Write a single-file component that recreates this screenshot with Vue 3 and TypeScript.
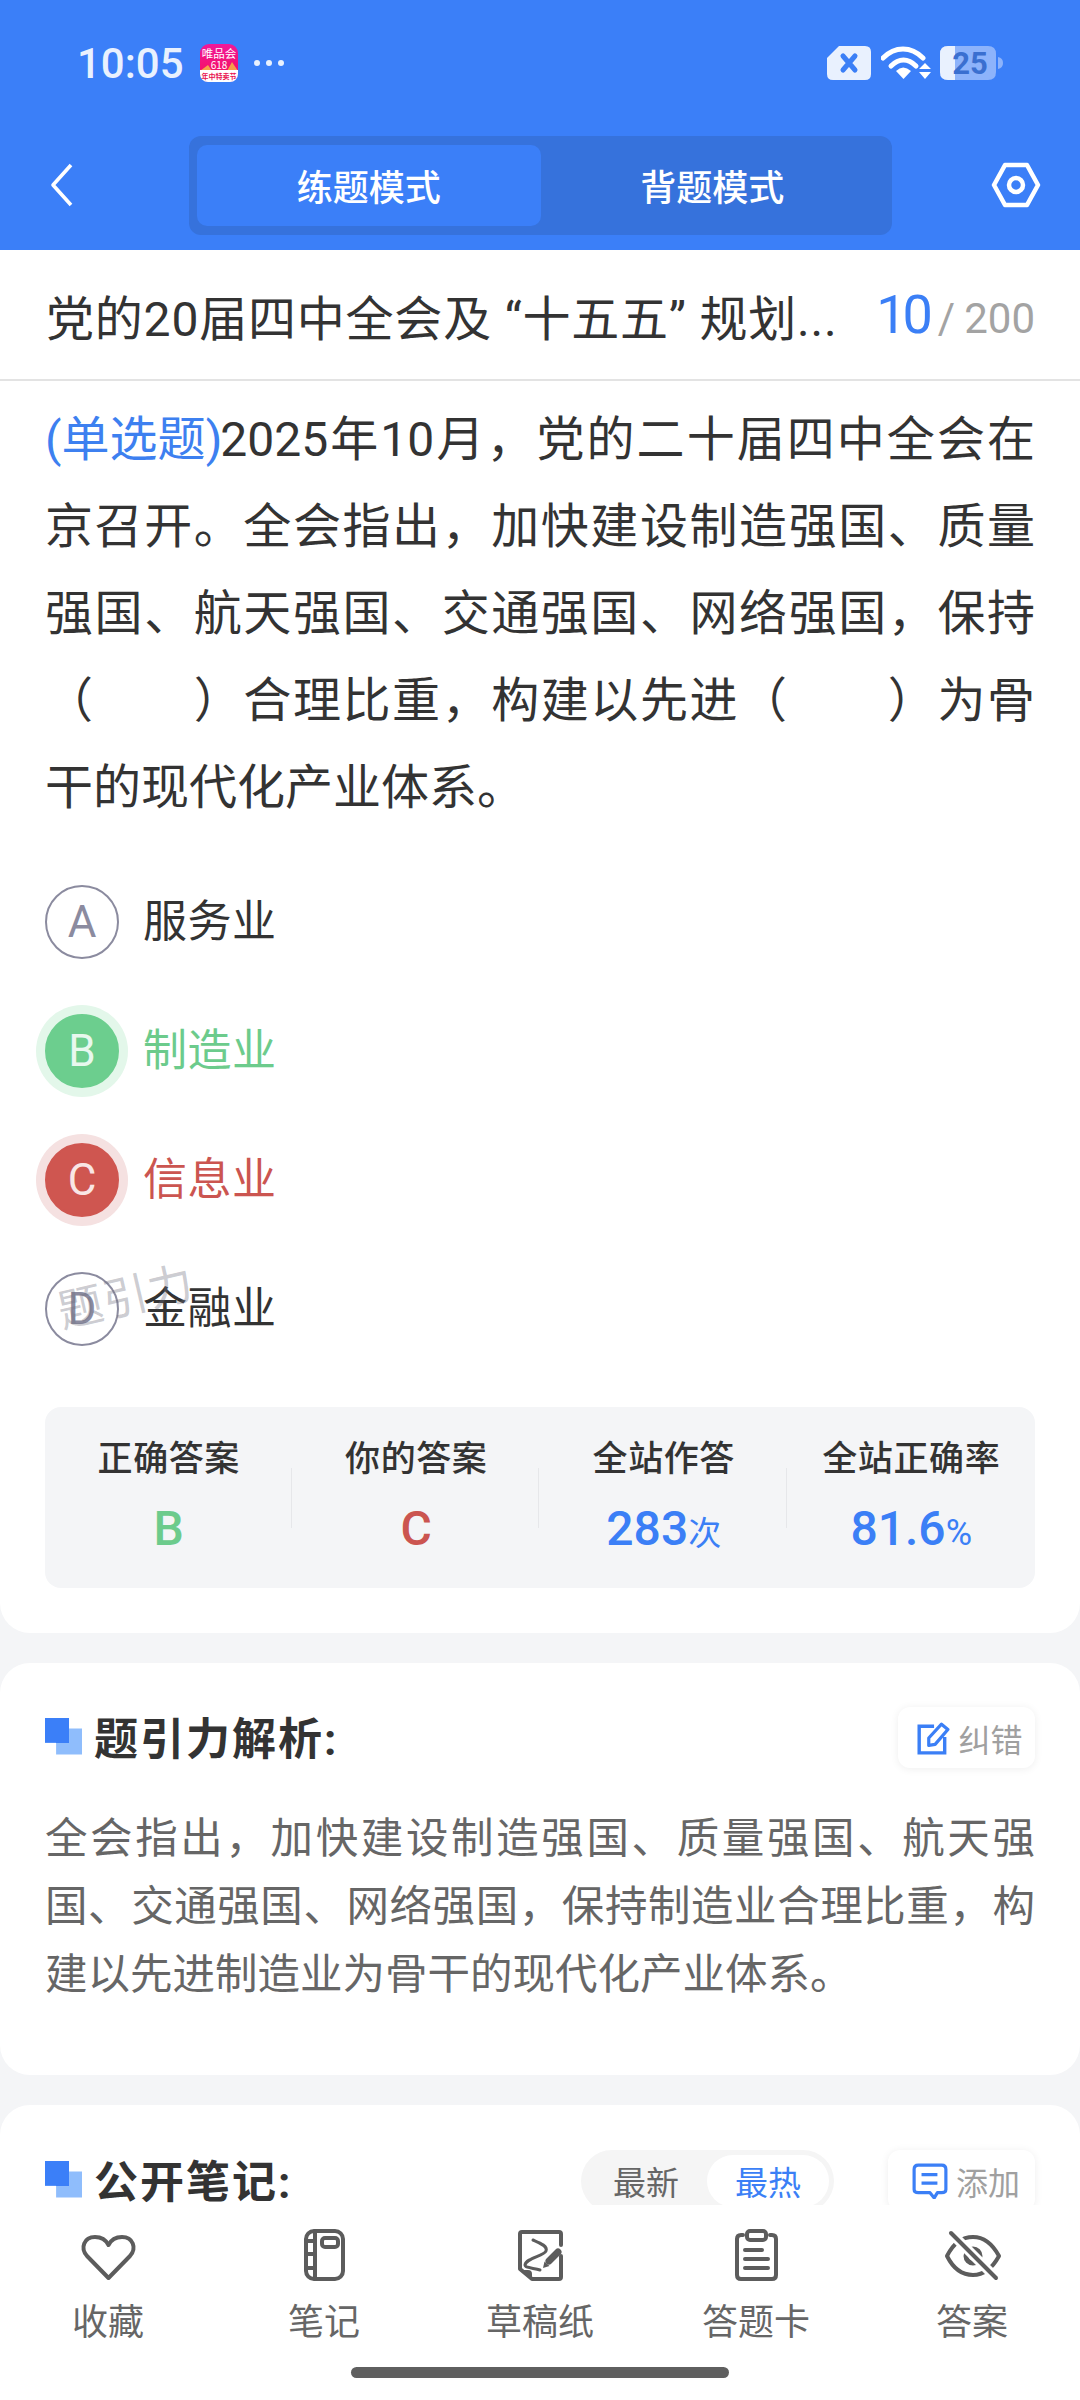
<template>
  <div class="page">
    <header class="top">
      <div class="status">
        <span class="time">10:05</span>
        <svg class="vip" width="38" height="38" viewBox="0 0 38 38">
          <defs>
            <linearGradient id="vipBg" x1="0" y1="0" x2="0" y2="1">
              <stop offset="0" stop-color="#f0189a" />
              <stop offset="0.7" stop-color="#f5106a" />
            </linearGradient>
          </defs>
          <rect width="38" height="38" rx="9" fill="url(#vipBg)" />
          <path d="M0 27L8 21L12 27ZM38 27L32 18L27 27Z" fill="#f7a04a" />
          <path d="M0 26h38v4a8 8 0 0 1-8 8H8a8 8 0 0 1-8-8z" fill="#fff" />
          <text x="19" y="14" text-anchor="middle" font-size="11.5" fill="#fff">唯品会</text>
          <text x="19" y="25" text-anchor="middle" font-size="10" fill="#fff">618</text>
          <text x="19" y="35" text-anchor="middle" font-size="7" font-weight="700" fill="#e8114f">年中特卖节</text>
        </svg>
        <span class="dots"><i></i><i></i><i></i></span>
        <span class="status-gap"></span>
        <svg width="44" height="36" viewBox="0 0 44 36">
          <path d="M12 1H38Q44 1 44 7V29Q44 35 38 35H6Q0 35 0 29V13Z" fill="#e9f1fe" />
          <path d="M16 11L28 25M28 11L16 25" stroke="#3b7ff6" stroke-width="5" stroke-linecap="round" />
        </svg>
        <svg class="wifi" width="50" height="36" viewBox="0 0 50 36">
          <path d="M2 13C14 1 30 1 42 13" fill="none" stroke="#fff" stroke-width="5" stroke-linecap="round" />
          <path d="M10 21C18 13 27 13 35 21" fill="none" stroke="#fff" stroke-width="5" stroke-linecap="round" />
          <path d="M15 26Q22 19 30 26L22.5 34Z" fill="#fff" />
          <path d="M44 18L50 24H38ZM38 27H50L44 34Z" fill="#fff" />
        </svg>
        <svg class="battery" width="66" height="36" viewBox="0 0 66 36">
          <path d="M10 1H50Q58 1 58 9V27Q58 35 50 35H10Q2 35 2 27V9Q2 1 10 1Z" fill="#8db3fb" />
          <path d="M10 1H17V35H10Q2 35 2 27V9Q2 1 10 1Z" fill="#e9f1fe" />
          <path d="M60 12Q65 13 65 18Q65 23 60 24Z" fill="#8db3fb" />
          <text x="32" y="29" text-anchor="middle" font-size="31" font-weight="700" font-family="Roboto, sans-serif" fill="#3a6fd0">25</text>
        </svg>
      </div>
      <nav class="nav">
        <svg class="back" width="24" height="44" viewBox="0 0 24 44">
          <path d="M21 2L3 22L21 42" fill="none" stroke="#fff" stroke-width="3.6" stroke-linejoin="round" />
        </svg>
        <div class="tabs">
          <div
            v-for="tab in tabs"
            :key="tab"
            class="tab"
            :class="{ active: tab === activeTab }"
          >
            {{ tab }}
          </div>
        </div>
        <svg class="gear" width="50" height="46" viewBox="0 0 50 46">
          <path d="M14 3H36L47 23L36 43H14L3 23Z" fill="none" stroke="#fff" stroke-width="4.5" stroke-linejoin="round" />
          <circle cx="25" cy="23" r="7" fill="none" stroke="#fff" stroke-width="4.5" />
        </svg>
      </nav>
    </header>

    <main class="content">
      <section class="card question-card">
        <div class="title-row">
          <span class="title">党的20届四中全会及 “十五五” 规划...</span>
          <span class="counter"><b>10</b><i>/</i>200</span>
        </div>
        <p class="question">
          <span class="q-type">(单选题)</span>2025年10月，党的二十届四中全会在京召开。全会指出，加快建设制造强国、质量强国、航天强国、交通强国、网络强国，保持（　　）合理比重，构建以先进（　　）为骨干的现代化产业体系。
        </p>
        <ul class="options">
          <li v-for="opt in options" :key="opt.key" class="option" :class="opt.state">
            <span class="letter">{{ opt.key }}</span>
            <span class="opt-text">{{ opt.text }}</span>
          </li>
          <li class="watermark">题引力</li>
        </ul>
        <div class="stats">
          <div class="stat">
            <div class="stat-label">正确答案</div>
            <div class="stat-value green">B</div>
          </div>
          <div class="stat">
            <div class="stat-label">你的答案</div>
            <div class="stat-value red">C</div>
          </div>
          <div class="stat">
            <div class="stat-label">全站作答</div>
            <div class="stat-value blue">283<small>次</small></div>
          </div>
          <div class="stat">
            <div class="stat-label">全站正确率</div>
            <div class="stat-value blue">81.6<small class="pct">%</small></div>
          </div>
        </div>
      </section>

      <section class="card analysis-card">
        <div class="head-row">
          <h2 class="heading"><span class="mark"></span>题引力解析:</h2>
          <span class="mini-btn fix-btn">
            <svg width="34" height="34" viewBox="0 0 32 32">
              <path d="M17 5H3V30H27V15" fill="none" stroke="#3b7ff6" stroke-width="3.2" />
              <path d="M12 23V16L24 3L30 8L18 22Z" fill="none" stroke="#3b7ff6" stroke-width="3" stroke-linejoin="round" />
            </svg>
            纠错
          </span>
        </div>
        <div class="analysis">
          <p v-for="line in analysisLines" :key="line">{{ line }}</p>
        </div>
      </section>

      <section class="card notes-card">
        <div class="head-row">
          <h2 class="heading"><span class="mark"></span>公开笔记:</h2>
          <div class="notes-tools">
            <div class="segment">
              <span>最新</span>
              <span class="on">最热</span>
            </div>
            <span class="mini-btn add-btn">
              <svg width="36" height="36" viewBox="0 0 34 34">
                <path d="M6 2H28Q32 2 32 6V25Q32 28 28 28H24L21 33L17 28H6Q2 28 2 25V6Q2 2 6 2Z" fill="none" stroke="#3b7ff6" stroke-width="3" stroke-linejoin="round" />
                <path d="M9 11H24M9 19H24" stroke="#3b7ff6" stroke-width="3" />
              </svg>
              添加
            </span>
          </div>
        </div>
      </section>
    </main>

    <footer class="bottom">
      <div class="actions">
        <div class="action">
          <svg width="64" height="64" viewBox="0 0 64 64">
            <path d="M32.5 54L11 32C4 24 8 13 19 13C25 13 30 16 32.5 21C35 16 40 13 46 13C57 13 61 24 54 32Z" />
          </svg>
          <span>收藏</span>
        </div>
        <div class="action">
          <svg width="64" height="64" viewBox="0 0 64 64">
            <rect x="14" y="7" width="37" height="48" rx="8" />
            <path d="M23 7V55M14 17H23M14 30H23M14 44H23" />
            <rect x="30" y="14" width="16" height="9" rx="3" />
          </svg>
          <span>笔记</span>
        </div>
        <div class="action">
          <svg width="64" height="64" viewBox="0 0 64 64">
            <path d="M53 21V10Q53 8 51 8H14Q12 8 12 10V45L24 55H51Q53 55 53 53V32" />
            <path class="solid" d="M12 46H20Q24 46 24 50V55Z" />
            <path stroke-width="3" d="M25 16C32 19 40 22 38 27C36 32 18 34 17 41C17 44 26 44 32 46" />
            <path stroke-width="7" d="M41 37L50 28" />
            <path class="solid" d="M35 44L36.5 37.5L41.5 42Z" />
          </svg>
          <span>草稿纸</span>
        </div>
        <div class="action">
          <svg width="64" height="64" viewBox="0 0 64 64">
            <path d="M19 11H17Q13 11 13 15V51Q13 55 17 55H48Q52 55 52 51V15Q52 11 48 11H46" />
            <rect x="23" y="7" width="19" height="9" rx="3" />
            <path d="M21 26H38M21 35H44M21 44H44" />
          </svg>
          <span>答题卡</span>
        </div>
        <div class="action">
          <svg width="64" height="64" viewBox="0 0 64 64">
            <path d="M7 32C13 20 22 13 33 13C45 13 53 21 59 32C53 43 45 51 33 51C22 51 13 44 7 32Z" />
            <circle cx="33" cy="32" r="7" stroke-width="5" />
            <path class="cut" d="M11 9L56 54" />
            <path d="M11 9L56 54" />
          </svg>
          <span>答案</span>
        </div>
      </div>
      <div class="home-bar"></div>
    </footer>
  </div>
</template>

<script setup lang="ts">
type OptionState = "" | "right" | "wrong";

interface OptionItem {
  key: string;
  text: string;
  state: OptionState;
}

const tabs: string[] = ["练题模式", "背题模式"];
const activeTab = "练题模式";

const options: OptionItem[] = [
  { key: "A", text: "服务业", state: "" },
  { key: "B", text: "制造业", state: "right" },
  { key: "C", text: "信息业", state: "wrong" },
  { key: "D", text: "金融业", state: "" },
];

// the line breaks of the original are kept as they are
const analysisLines: string[] = [
  "全会指出，加快建设制造强国、质量强国、航天强",
  "国、交通强国、网络强国，保持制造业合理比重，构",
  "建以先进制造业为骨干的现代化产业体系。",
];
</script>

<style>
html,
body {
  margin: 0;
  background: #fff;
}
</style>

<style scoped>
.page {
  display: flex;
  flex-direction: column;
  width: 1080px;
  height: 2400px;
  overflow: hidden;
  background: #f4f5f7;
  color: #333;
  font-family: Roboto, "Noto Sans CJK SC", sans-serif;
}

/* header */
.top {
  flex-shrink: 0;
  height: 250px;
  background: #3b7ff8;
  color: #fff;
}

.status {
  display: flex;
  align-items: center;
  height: 126px;
  padding: 0 76px 0 77px;
  box-sizing: border-box;
}

.time {
  font-size: 42px;
  font-weight: 500;
  color: #e9f1fe;
}

.vip {
  margin-left: 16px;
}

.vip text {
  font-family: "Noto Sans CJK SC", sans-serif;
}

.dots {
  display: flex;
  gap: 6px;
  margin-left: 16px;
}

.dots i {
  width: 6px;
  height: 6px;
  border-radius: 50%;
  background: #e9f1fe;
}

.status-gap {
  flex: 1;
}

.wifi {
  margin-left: 10px;
}

.battery {
  margin-left: 7px;
}

.nav {
  display: flex;
  align-items: center;
  height: 99px;
  margin-top: 10px;
  padding: 0 39px 0 50px;
}

.back {
  flex-shrink: 0;
  margin-bottom: 2px;
}

.tabs {
  display: flex;
  box-sizing: border-box;
  width: 703px;
  height: 99px;
  margin-left: 115px;
  padding: 9px 8px;
  border-radius: 12px;
  background: #3672dc;
}

.tab {
  display: flex;
  flex: 1;
  align-items: center;
  justify-content: center;
  padding-bottom: 2px;
  border-radius: 10px;
  font-size: 36px;
  font-weight: 500;
}

.tab.active {
  background: #3b7ff8;
}

.gear {
  margin-left: auto;
  margin-bottom: 2px;
}

/* scrolling part */
.content {
  flex: 1;
  min-height: 0;
  overflow: hidden;
}

.card {
  background: #fff;
  padding: 0 45px;
}

.question-card {
  height: 1383px;
  box-sizing: border-box;
  border-radius: 0 0 30px 30px;
}

.title-row {
  display: flex;
  align-items: center;
  justify-content: space-between;
  height: 131px;
  margin: 0 -45px;
  padding: 0 45px 0 46px;
  border-bottom: 2px solid #e3e3e3;
  box-sizing: border-box;
}

.title {
  font-size: 48px;
  letter-spacing: 0.8px;
  white-space: nowrap;
}

.counter {
  font-size: 42px;
  color: #a3a3a3;
}

.counter b {
  font-size: 54px;
  font-weight: 400;
  letter-spacing: -4px;
  color: #3b7ff6;
}

.counter i {
  margin: 0 9px;
  font-style: normal;
}

.question {
  margin: 15px 0 0;
  font-size: 48px;
  line-height: 87px;
  text-align: justify;
}

.q-type {
  letter-spacing: -2px;
  color: #3d80f0;
}

.options {
  position: relative;
  margin: 26px 0 0;
  padding: 0;
  list-style: none;
}

.option {
  display: flex;
  align-items: center;
  height: 129px;
}

.letter {
  display: flex;
  align-items: center;
  justify-content: center;
  box-sizing: border-box;
  width: 74px;
  height: 74px;
  border: 2px solid #8b8b9f;
  border-radius: 50%;
  font-size: 44px;
  color: #8b8b9f;
}

.opt-text {
  margin-left: 24px;
  padding-bottom: 8px;
  font-size: 44px;
  letter-spacing: 0.5px;
}

.option.right .letter {
  border-color: #6cce8e;
  background: #6cce8e;
  box-shadow: 0 0 0 9px #e3f7ea;
  color: #e8f8ee;
}

.option.right .opt-text {
  color: #6ccb8c;
}

.option.wrong .letter {
  border-color: #cf5650;
  background: #cf5650;
  box-shadow: 0 0 0 9px #f5e1e1;
  color: #f9e6e5;
}

.option.wrong .opt-text {
  color: #cb5550;
}

.watermark {
  position: absolute;
  left: 11px;
  top: 404px;
  transform: rotate(-13deg);
  font-size: 45px;
  letter-spacing: 1px;
  color: rgba(110, 110, 125, 0.36);
}

.stats {
  display: grid;
  grid-template-columns: repeat(4, 1fr);
  height: 181px;
  margin-top: 34px;
  border-radius: 16px;
  background: #f4f5f7;
}

.stat {
  position: relative;
  text-align: center;
}

.stat + .stat::before {
  content: "";
  position: absolute;
  left: -2px;
  top: 61px;
  width: 1px;
  height: 60px;
  background: #e6e7ea;
}

.stat-label {
  margin-top: 30px;
  font-size: 35px;
  font-weight: 500;
  letter-spacing: 0.6px;
  line-height: 46px;
}

.stat-value {
  margin-top: 18px;
  font-size: 48px;
  font-weight: 500;
  line-height: 56px;
}

.stat-value small {
  font-size: 33px;
  font-weight: 400;
}

.stat-value .pct {
  font-size: 36px;
}

.green {
  color: #6ccb8c;
}

.red {
  color: #cb5550;
}

.blue {
  color: #3b7ff6;
}

.analysis-card {
  height: 412px;
  box-sizing: border-box;
  margin-top: 30px;
  padding-top: 44px;
  border-radius: 30px;
}

.analysis {
  margin-top: 37px;
  font-size: 42.5px;
  line-height: 68px;
  color: #666;
}

.analysis p {
  margin: 0;
  text-align: justify;
  text-align-last: justify;
  white-space: nowrap;
}

.analysis p:last-child {
  text-align-last: left;
}

.notes-card {
  height: 150px;
  box-sizing: border-box;
  margin-top: 30px;
  padding-top: 45px;
  border-radius: 30px 30px 0 0;
}

.head-row {
  display: flex;
  align-items: center;
  justify-content: space-between;
  height: 61px;
}

.heading {
  display: flex;
  align-items: center;
  margin: 0 0 3px;
  font-size: 44px;
  font-weight: 700;
  letter-spacing: 2px;
}

.mark {
  position: relative;
  width: 37px;
  height: 37px;
  margin-right: 12px;
  background: #8fbdfc;
  clip-path: polygon(0 0, 65% 0, 65% 30%, 100% 30%, 100% 100%, 30% 100%, 30% 68%, 0 68%);
}

.mark::before {
  content: "";
  position: absolute;
  left: 0;
  top: 0;
  width: 24px;
  height: 25px;
  background: #3b7ff8;
}

.mini-btn {
  display: flex;
  align-items: center;
  justify-content: center;
  gap: 8px;
  box-sizing: border-box;
  height: 61px;
  border-radius: 12px;
  background: #fff;
  box-shadow: 0 1px 8px rgba(0, 0, 0, 0.07);
  font-size: 32px;
  color: #a0a0a0;
}

.fix-btn {
  width: 137px;
  padding-left: 6px;
}

.add-btn {
  width: 147px;
  padding-left: 9px;
}

.notes-tools {
  display: flex;
  align-items: center;
  gap: 54px;
}

.segment {
  display: flex;
  align-items: center;
  box-sizing: border-box;
  width: 253px;
  height: 62px;
  padding: 5px 5px 5px 4px;
  border-radius: 31px;
  background: #f5f5f5;
  font-size: 33px;
  color: #666;
}

.segment span {
  display: flex;
  flex: 1;
  align-items: center;
  justify-content: center;
  height: 100%;
  border-radius: 26px;
}

.segment .on {
  background: #fff;
  color: #3b7ff6;
}

/* bottom bar */
.bottom {
  position: relative;
  flex-shrink: 0;
  height: 195px;
  background: #fff;
}

.actions {
  display: grid;
  grid-template-columns: repeat(5, 216px);
  padding-top: 19px;
}

.action {
  display: flex;
  flex-direction: column;
  align-items: center;
  font-size: 36px;
  color: #666;
}

.action svg {
  fill: none;
  stroke: #5c5c5c;
  stroke-width: 4;
  stroke-linecap: round;
  stroke-linejoin: round;
}

.action svg .solid {
  fill: #5c5c5c;
  stroke: none;
}

.action svg .cut {
  stroke: #fff;
  stroke-width: 10;
}

.action span {
  margin-top: 11px;
  line-height: 48px;
}

.home-bar {
  width: 378px;
  height: 11px;
  margin: 20px auto 0;
  border-radius: 6px;
  background: #5f5f5f;
}
</style>
